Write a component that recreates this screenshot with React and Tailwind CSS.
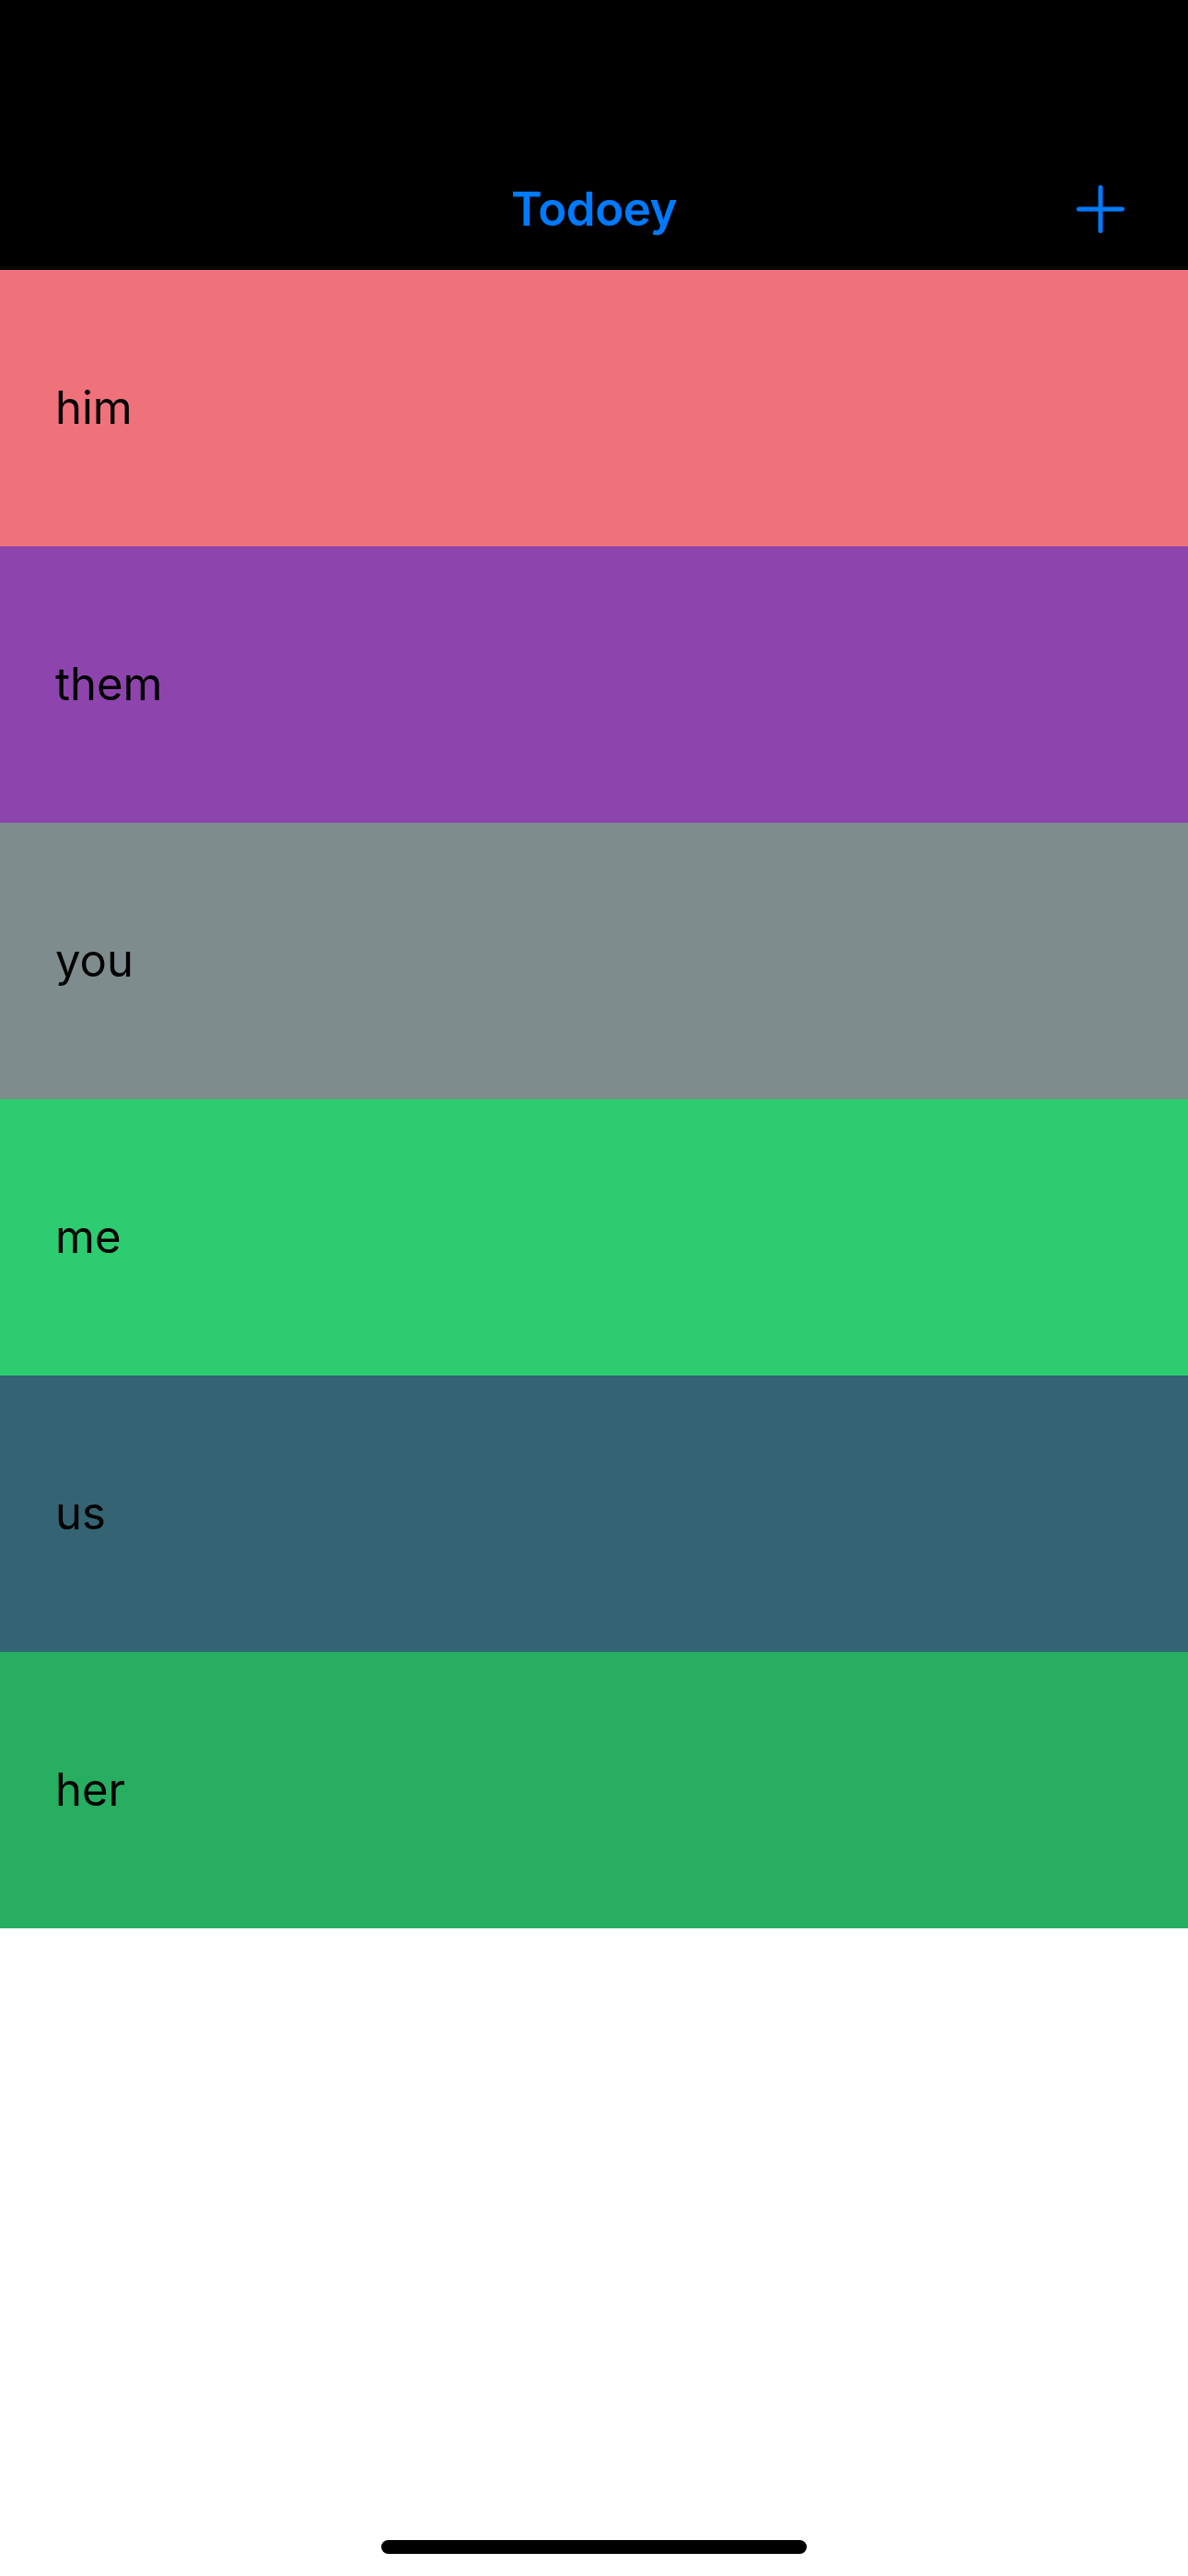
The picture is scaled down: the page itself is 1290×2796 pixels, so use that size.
const items = [
  { title: "him", color: "bg-[#ef717a]" },
  { title: "them", color: "bg-[#8e44ad]" },
  { title: "you", color: "bg-[#7f8c8d]" },
  { title: "me", color: "bg-[#2ecc71]" },
  { title: "us", color: "bg-[#346474]" },
  { title: "her", color: "bg-[#27ae60]" },
];

function PlusIcon() {
  return (
    <svg width="56" height="56" viewBox="0 0 56 56" fill="none">
      <path
        d="M28 4.5v47M4.5 28h47"
        stroke="currentColor"
        strokeWidth="5"
        strokeLinecap="round"
      />
    </svg>
  );
}

export default function App() {
  return (
    <div
      className="relative w-[1290px] h-[2796px] bg-white overflow-hidden"
      style={{ fontFamily: "Inter, 'Noto Sans', sans-serif" }}
    >
      {/* NAV */}
      <div className="bg-black h-[293px] pt-[179px]">
        <div className="relative h-[96px] flex items-center justify-center">
          <h1 className="text-[51px] font-semibold text-[#007aff] tracking-[-0.5px]">
            Todoey
          </h1>
          <button className="absolute right-[67px] top-[20px] text-[#007aff]">
            <PlusIcon />
          </button>
        </div>
      </div>

      {/* LISTA */}
      <div className="flex flex-col">
        {items.map((item) => (
          <div
            key={item.title}
            className={`h-[300px] flex items-center px-[60px] ${item.color}`}
          >
            <span className="text-[49px] text-black">{item.title}</span>
          </div>
        ))}
      </div>

      {/* HOME INDICATOR */}
      <div className="absolute left-[414px] top-[2757px] w-[462px] h-[15px] rounded-full bg-black" />
    </div>
  );
}
